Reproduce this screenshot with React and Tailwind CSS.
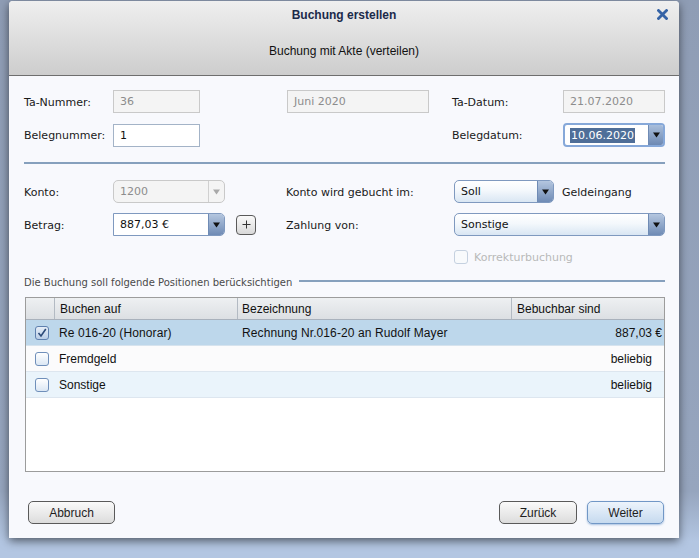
import React from "react";

const dv = "font-['DejaVu_Sans',sans-serif]";
const lib = "font-['Liberation_Sans',Arial,sans-serif]";

function Arrow({ color = "#111" }) {
  return (
    <svg width="7" height="6" viewBox="0 0 7 6">
      <path d="M0 0.5 L7 0.5 L3.5 5.5 Z" fill={color} />
    </svg>
  );
}

function DisabledInput({ value, className }) {
  return (
    <div className={`h-[23px] border border-[#c9c9c9] bg-[#f4f4f4] text-[#8c8c8c] pl-[6px] pt-[2px] flex items-center text-[11px] ${dv} ${className}`}>
      {value}
    </div>
  );
}

function Checkbox({ checked, disabled }) {
  return (
    <div
      className={`w-[14px] h-[14px] rounded-[3px] border flex items-center justify-center ${
        disabled
          ? "border-[#c5d1e0] bg-[#f8fafc]"
          : checked
          ? "border-[#5f80ae] bg-[linear-gradient(to_bottom,#e6eef8,#b9cde6)]"
          : "border-[#6f8fba] bg-[linear-gradient(to_bottom,#ffffff,#dbe7f4)]"
      }`}
    >
      {checked && (
        <svg width="10" height="10" viewBox="0 0 10 10">
          <path d="M1.5 5 L4 8 L8.8 1" fill="none" stroke="#2c4a78" strokeWidth="1.6" />
        </svg>
      )}
    </div>
  );
}

function Label({ children, className }) {
  return <div className={`pt-[3px] ${className}`}>{children}</div>;
}

function BlueCombo({ value, className }) {
  return (
    <div className={`h-[23px] rounded-[5px] border border-[#7f99bf] bg-[linear-gradient(to_bottom,#ffffff_0%,#f4f8fc_45%,#d9e6f3_100%)] flex overflow-hidden ${className}`}>
      <div className={`flex-1 flex items-center pl-[6px] pt-[2px] text-[11px] text-[#111] ${dv}`}>{value}</div>
      <div className="w-[16px] border-l border-[#6f8bb5] bg-[linear-gradient(to_bottom,#b4c6df,#6f8bb5)] flex items-center justify-center">
        <Arrow />
      </div>
    </div>
  );
}

function Btn({ children, primary, className }) {
  return (
    <div
      className={`h-[23px] rounded-[5px] border flex items-center justify-center text-[12px] text-[#1e1e1e] ${lib} ${
        primary
          ? "border-[#7197c6] bg-[linear-gradient(to_bottom,#edf4fc,#c6daef)] shadow-[0_1px_2px_rgba(90,140,200,0.5)]"
          : "border-[#5a5a5a] bg-[linear-gradient(to_bottom,#fafafa,#dcdcdc)]"
      } ${className}`}
    >
      {children}
    </div>
  );
}

export default function App() {
  return (
    <div className="w-[699px] h-[558px] overflow-hidden bg-[linear-gradient(to_bottom,#8f9db5_0%,#96a5be_88%,#b3c6e2_97%)] pt-[1px]">
      <div className="ml-[9px] w-[670px] h-[537px] bg-[#f8f9fd] rounded-t-[4px] shadow-[0_3px_10px_rgba(0,0,0,0.55)] flex flex-col">
        {/* Header */}
        <div className={`relative h-[75px] shrink-0 border-b border-[#6e6e6e] rounded-t-[4px] bg-[linear-gradient(to_bottom,#efefef,#cdcdcd)] flex flex-col items-center ${lib}`}>
          <div className="mt-[6px] h-[16px] leading-[16px] text-[12px] font-bold text-[#1b2a4a]">Buchung erstellen</div>
          <div className="mt-[20px] h-[16px] leading-[16px] text-[12px] text-[#111]">Buchung mit Akte (verteilen)</div>
          <svg className="absolute right-[11px] top-[8px]" width="11" height="11" viewBox="0 0 11 11">
            <path d="M1.5 1.5 L9.5 9.5 M9.5 1.5 L1.5 9.5" stroke="#3563a6" strokeWidth="2.8" strokeLinecap="square" />
          </svg>
        </div>

        {/* Body */}
        <div className={`flex-1 pl-[15px] pr-[14px] text-[11px] text-[#1a1a1a] ${dv}`}>
          {/* Row 1 */}
          <div className="mt-[14px] flex items-center h-[23px]">
            <Label className="w-[89px]">Ta-Nummer:</Label>
            <DisabledInput value="36" className="w-[87px]" />
            <div className="w-[87px]" />
            <DisabledInput value="Juni 2020" className="w-[142px]" />
            <div className="w-[23px]" />
            <Label className="w-[111px]">Ta-Datum:</Label>
            <DisabledInput value="21.07.2020" className="w-[102px]" />
          </div>
          {/* Row 2 */}
          <div className="mt-[10px] flex items-center h-[24px]">
            <Label className="w-[89px]">Belegnummer:</Label>
            <div className="w-[87px] h-[23px] border border-[#a3b3c7] bg-white pl-[6px] pt-[2px] flex items-center text-[#111]">1</div>
            <div className="w-[252px]" />
            <Label className="w-[111px]">Belegdatum:</Label>
            <div className="w-[102px] h-[24px] rounded-[4px] border-2 border-[#86a8d9] bg-white flex overflow-hidden">
              <div className="flex-1 flex items-center pl-[5px] pt-[1px]">
                <span className="bg-[#4f6e98] text-white leading-[15px] px-[1px]">10.06.2020</span>
              </div>
              <div className="w-[15px] border-l border-[#6f8bb5] bg-[linear-gradient(to_bottom,#a9bedb,#6d89b3)] flex items-center justify-center">
                <Arrow />
              </div>
            </div>
          </div>
          {/* Separator */}
          <div className="mt-[15px] h-[2px] bg-[#86a0bd]" />
          {/* Row 3 */}
          <div className="mt-[16px] flex items-center h-[23px]">
            <Label className="w-[89px]">Konto:</Label>
            <div className="w-[112px] h-[23px] rounded-[5px] border border-[#c9c9c9] bg-[#f4f4f4] flex overflow-hidden">
              <div className="flex-1 flex items-center pl-[6px] pt-[2px] text-[#8c8c8c]">1200</div>
              <div className="w-[16px] border-l border-[#d0d0d0] flex items-center justify-center">
                <Arrow color="#a9a9a9" />
              </div>
            </div>
            <div className="w-[61px]" />
            <Label className="w-[168px]">Konto wird gebucht im:</Label>
            <BlueCombo value="Soll" className="w-[100px]" />
            <Label className="ml-[8px]">Geldeingang</Label>
          </div>
          {/* Row 4 */}
          <div className="mt-[10px] flex items-center h-[23px]">
            <Label className="w-[89px]">Betrag:</Label>
            <div className="w-[112px] h-[23px] rounded-r-[5px] border border-[#7f99bf] bg-white flex overflow-hidden">
              <div className="flex-1 flex items-center pl-[6px] pt-[2px] text-[#111]">887,03 €</div>
              <div className="w-[16px] border-l border-[#6f8bb5] bg-[linear-gradient(to_bottom,#b4c6df,#6f8bb5)] flex items-center justify-center">
                <Arrow />
              </div>
            </div>
            <div className="ml-[11px] w-[20px] h-[20px] rounded-[4px] border border-[#5a5a5a] bg-[linear-gradient(to_bottom,#fafafa,#d9d9d9)] flex items-center justify-center">
              <svg width="9" height="9" viewBox="0 0 9 9">
                <path d="M4.5 0.5 V8.5 M0.5 4.5 H8.5" stroke="#333" strokeWidth="1" />
              </svg>
            </div>
            <div className="w-[30px]" />
            <Label className="w-[168px]">Zahlung von:</Label>
            <BlueCombo value="Sonstige" className="w-[211px]" />
          </div>
          {/* Row 5 */}
          <div className="mt-[14px] flex items-center h-[14px]">
            <div className="w-[430px]" />
            <Checkbox disabled />
            <Label className="ml-[6px] text-[#b9b9b9]">Korrekturbuchung</Label>
          </div>
          {/* Section label */}
          <div className="mt-[11px] flex items-center h-[12px]">
            <div className="text-[10px] text-[#4a4a4a] pt-[2px]">Die Buchung soll folgende Positionen berücksichtigen</div>
            <div className="ml-[7px] flex-1 h-[2px] bg-[#86a0bd]" />
          </div>
          {/* Table */}
          <div className={`mt-[10px] ml-[1px] h-[175px] border border-[#9c9c9c] bg-white text-[12px] text-[#111] ${lib}`}>
            <div className="h-[22px] flex border-b border-[#a9b1bc] bg-[linear-gradient(to_bottom,#eef0f2,#dcdfe3)]">
              <div className="w-[29px] border-r border-[#b3bac3]" />
              <div className="w-[183px] border-r border-[#b3bac3] pl-[5px] pt-[1px] flex items-center">Buchen auf</div>
              <div className="w-[274px] border-r border-[#b3bac3] pl-[4px] pt-[1px] flex items-center">Bezeichnung</div>
              <div className="flex-1 pl-[5px] pt-[1px] flex items-center">Bebuchbar sind</div>
            </div>
            <div className="h-[26px] flex items-center bg-[#bdd7eb] border-b border-[#d6e3ee]">
              <div className="w-[29px] flex justify-center pl-[2px]"><Checkbox checked /></div>
              <div className="w-[183px] pl-[4px] tracking-[0.1px]">Re 016-20 (Honorar)</div>
              <div className="w-[274px] pl-[4px] tracking-[0.1px]">Rechnung Nr.016-20 an Rudolf Mayer</div>
              <div className="flex-1 text-right pr-[2px]">887,03 €</div>
            </div>
            <div className="h-[26px] flex items-center bg-[#fbfbfc] border-b border-[#dde6ef]">
              <div className="w-[29px] flex justify-center pl-[2px]"><Checkbox /></div>
              <div className="w-[183px] pl-[4px]">Fremdgeld</div>
              <div className="w-[274px]" />
              <div className="flex-1 text-right pr-[12px]">beliebig</div>
            </div>
            <div className="h-[26px] flex items-center bg-[#eaf4fb] border-b border-[#dde6ef]">
              <div className="w-[29px] flex justify-center pl-[2px]"><Checkbox /></div>
              <div className="w-[183px] pl-[4px]">Sonstige</div>
              <div className="w-[274px]" />
              <div className="flex-1 text-right pr-[12px]">beliebig</div>
            </div>
          </div>
          {/* Buttons */}
          <div className="mt-[29px] flex items-center">
            <Btn className="ml-[4px] w-[87px]">Abbruch</Btn>
            <div className="flex-1" />
            <Btn className="w-[78px]">Zurück</Btn>
            <Btn primary className="ml-[10px] mr-[1px] w-[77px]">Weiter</Btn>
          </div>
        </div>
      </div>
    </div>
  );
}
